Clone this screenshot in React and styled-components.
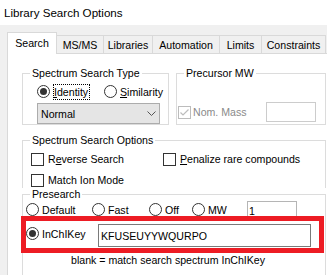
import React from 'react';
import styled, { createGlobalStyle } from 'styled-components';

const Global = createGlobalStyle`
  html, body { margin: 0; padding: 0; background: #f0f0f0; }
  body {
    font-family: "Liberation Sans", Arial, sans-serif;
    font-size: 10.6px;
    color: #000;
  }
  * { box-sizing: border-box; }
`;

const Window = styled.div`
  width: 327px;
  height: 275px;
  overflow: hidden;
  background: #f0f0f0;
  display: flex;
  flex-direction: column;
`;

const TitleBar = styled.div`
  flex: none;
  height: 25px;
  background: #fff;
  padding-left: 4px;
  display: flex;
  align-items: center;
  font-size: 11.6px;
  color: #000;
`;

const Body = styled.div`
  flex: 1;
  min-height: 0;
  padding: 7px 0 0 7px;
  display: flex;
  flex-direction: column;
`;

const TabStrip = styled.div`
  flex: none;
  height: 21px;
  display: flex;
  align-items: flex-end;
`;

const Tab = styled.div`
  flex: none;
  width: ${(p) => p.$w}px;
  height: ${(p) => (p.$active ? 22 : 18)}px;
  margin-bottom: ${(p) => (p.$active ? -1 : 0)}px;
  position: relative;
  z-index: ${(p) => (p.$active ? 1 : 0)};
  background: ${(p) => (p.$active ? '#fff' : '#f0f0f0')};
  border-top: 1px solid #d9d9d9;
  border-right: 1px solid #d9d9d9;
  border-left: ${(p) => (p.$active ? '1px solid #d9d9d9' : 'none')};
  display: flex;
  justify-content: center;
  align-items: center;
  padding-bottom: ${(p) => (p.$active ? 2 : 0)}px;
  white-space: nowrap;
`;

const Panel = styled.div`
  flex: 1;
  min-height: 0;
  background: #fff;
  border-top: 1px solid #d9d9d9;
  border-left: 1px solid #d9d9d9;
  padding: 13px 0 0 14px;
  display: flex;
  flex-direction: column;
`;

const Row = styled.div`
  display: flex;
  gap: 7px;
`;

const Group = styled.fieldset`
  flex: none;
  margin: ${(p) => p.$mt || 0}px 0 0 0;
  padding: 0;
  min-width: 0;
  width: ${(p) => p.$w}px;
  height: ${(p) => p.$h}px;
  border: 1px solid #dcdcdc;
  ${(p) => (p.$open ? 'border-bottom: none;' : '')}
  display: flex;
  flex-direction: column;
`;

const Legend = styled.legend`
  margin-left: 7px;
  padding: 0 2px;
  line-height: 13px;
  font-size: 10.6px;
  color: #000;
`;

const RadioRow = styled.div`
  display: flex;
  align-items: flex-start;
  margin: ${(p) => p.$mt || 0}px 0 0 ${(p) => p.$ml || 0}px;
`;

const RadioItem = styled.div`
  flex: none;
  width: ${(p) => (p.$w ? `${p.$w}px` : 'auto')};
  height: ${(p) => p.$h || 17}px;
  margin-top: ${(p) => p.$mt || 0}px;
  display: flex;
  align-items: center;
  gap: 3px;
`;

const Circle = styled.span`
  flex: none;
  width: 13px;
  height: 13px;
  border-radius: 50%;
  border: 1px solid #333;
  background: #fff;
  display: flex;
  align-items: center;
  justify-content: center;
  &::after {
    content: '';
    width: 7px;
    height: 7px;
    border-radius: 50%;
    background: ${(p) => (p.$checked ? '#333' : 'transparent')};
  }
`;

const Label = styled.span`
  line-height: 14px;
  white-space: nowrap;
  color: ${(p) => (p.$disabled ? '#8a8a8a' : '#000')};
  ${(p) => (p.$focus ? 'outline: 1px dotted #000; margin-left: 1px; padding-right: 1px;' : '')}
`;

const Select = styled.div`
  width: 123px;
  height: 21px;
  margin: 4px 0 0 14px;
  background: #e5e5e5;
  border: 1px solid #acacac;
  display: flex;
  align-items: center;
  justify-content: space-between;
  padding: 0 3px 0 3px;
`;

const CheckRow = styled.div`
  display: flex;
  align-items: center;
  margin: ${(p) => p.$mt || 0}px 0 0 ${(p) => p.$ml || 0}px;
  ${(p) => (p.$spread ? 'justify-content: space-between; padding-right: 9px;' : '')}
`;

const CheckItem = styled.div`
  flex: none;
  width: ${(p) => (p.$w ? `${p.$w}px` : 'auto')};
  display: flex;
  align-items: center;
  gap: ${(p) => (p.$gap != null ? p.$gap : 4)}px;
`;

const Box = styled.span`
  flex: none;
  width: 13px;
  height: 13px;
  border: 1px solid ${(p) => (p.$disabled ? '#bcbcbc' : '#333')};
  background: #fff;
  display: flex;
  align-items: center;
  justify-content: center;
`;

const TextBox = styled.div`
  flex: none;
  width: ${(p) => p.$w}px;
  height: ${(p) => p.$h}px;
  margin-top: ${(p) => p.$mt || 0}px;
  border: 1px solid ${(p) => p.$border || '#7a7a7a'};
  background: #fff;
  padding-left: ${(p) => (p.$pl != null ? p.$pl : 2)}px;
  display: flex;
  align-items: center;
  white-space: nowrap;
`;

const KeyRow = styled.div`
  position: relative;
  width: 293px;
  height: 27px;
  margin-left: 3px;
  display: flex;
  align-items: flex-start;
`;

const RedFrame = styled.div`
  position: absolute;
  inset: -5px;
  border: 5px solid #ed1c24;
  pointer-events: none;
`;

const Hint = styled.div`
  margin: 6px 0 0 48px;
  line-height: 13px;
  white-space: nowrap;
`;

const Chevron = () => (
  <svg width="9" height="5" viewBox="0 0 9 5">
    <path d="M0.5 0.5 L4.5 4.5 L8.5 0.5" fill="none" stroke="#555" strokeWidth="1" />
  </svg>
);

const Check = () => (
  <svg width="11" height="11" viewBox="0 0 11 11">
    <path d="M1.5 5.5 L4 8 L9.5 2.5" fill="none" stroke="#bcbcbc" strokeWidth="1.2" />
  </svg>
);

const tabs = [
  ['Search', 50, true],
  ['MS/MS', 47],
  ['Libraries', 49],
  ['Automation', 67],
  ['Limits', 42],
  ['Constraints', 64],
];

export default function App() {
  return (
    <Window>
      <Global />
      <TitleBar>Library Search Options</TitleBar>
      <Body>
        <TabStrip>
          {tabs.map(([t, w, a]) => (
            <Tab key={t} $w={w} $active={a}>
              {t}
            </Tab>
          ))}
        </TabStrip>
        <Panel>
          <Row>
            <Group $w={147} $h={58}>
              <Legend>Spectrum Search Type</Legend>
              <RadioRow $mt={4} $ml={14}>
                <RadioItem $w={67} $h={15}>
                  <Circle $checked />
                  <Label $focus>
                    <u>I</u>dentity
                  </Label>
                </RadioItem>
                <RadioItem $h={15}>
                  <Circle />
                  <Label>
                    <u>S</u>imilarity
                  </Label>
                </RadioItem>
              </RadioRow>
              <Select>
                <span>Normal</span>
                <Chevron />
              </Select>
            </Group>
            <Group $w={150} $h={58}>
              <Legend>Precursor MW</Legend>
              <CheckRow $mt={22} $ml={1} $spread>
                <CheckItem $gap={2}>
                  <Box $disabled>
                    <Check />
                  </Box>
                  <Label $disabled>Nom. Mass</Label>
                </CheckItem>
                <TextBox $w={50} $h={20} $border="#cccccc" />
              </CheckRow>
            </Group>
          </Row>
          <Group $w={304} $h={54} $mt={9} $open>
            <Legend>Spectrum Search Options</Legend>
            <CheckRow $mt={5} $ml={8}>
              <CheckItem $w={132}>
                <Box />
                <Label>
                  R<u>e</u>verse Search
                </Label>
              </CheckItem>
              <CheckItem>
                <Box />
                <Label>
                  <u>P</u>enalize rare compounds
                </Label>
              </CheckItem>
            </CheckRow>
            <CheckRow $mt={7} $ml={8}>
              <CheckItem>
                <Box />
                <Label>Match Ion Mode</Label>
              </CheckItem>
            </CheckRow>
          </Group>
          <Group $w={304} $h={120}>
            <Legend>Presearch</Legend>
            <RadioRow $ml={3}>
              <RadioItem $w={66}>
                <Circle />
                <Label>Default</Label>
              </RadioItem>
              <RadioItem $w={57}>
                <Circle />
                <Label>Fast</Label>
              </RadioItem>
              <RadioItem $w={43}>
                <Circle />
                <Label>Off</Label>
              </RadioItem>
              <RadioItem $w={55}>
                <Circle />
                <Label>MW</Label>
              </RadioItem>
              <TextBox $w={50} $h={20} $border="#b5b5b5" $pl={1}>
                1
              </TextBox>
            </RadioRow>
            <KeyRow>
              <RadioItem $w={72} $h={13} $mt={6}>
                <Circle $checked />
                <Label>InChIKey</Label>
              </RadioItem>
              <TextBox $w={213} $h={23} $mt={3}>
                KFUSEUYYWQURPO
              </TextBox>
              <RedFrame />
            </KeyRow>
            <Hint>blank = match search spectrum InChIKey</Hint>
          </Group>
        </Panel>
      </Body>
    </Window>
  );
}
